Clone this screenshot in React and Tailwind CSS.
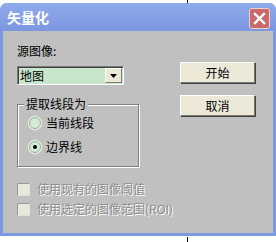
import React from "react";

const font = { fontFamily: '"Noto Sans CJK SC", "Noto Sans", sans-serif' };

const Radio = ({ checked, label }) => (
  <div className="flex items-center h-[16px] gap-[5px]">
    <span className="w-[12px] h-[12px] rounded-full border border-[#9aa89a] bg-[#d4ead4] shadow-[0_0_1px_1px_#f2f8f2] flex items-center justify-center">
      {checked && <span className="w-[4px] h-[4px] rounded-full bg-black" />}
    </span>
    <span className="text-[12px] leading-[16px] text-black">{label}</span>
  </div>
);

const Check = ({ label }) => (
  <div className="flex items-center h-[16px] gap-[7px]">
    <span className="w-[13px] h-[13px] border border-[#9c9c94] border-r-[#e0e0d8] border-b-[#e0e0d8] bg-[#e9e8dc]" />
    <span className="text-[12px] leading-[16px] text-[#8e8e8e] [text-shadow:1px_1px_0_#ffffff]">
      {label}
    </span>
  </div>
);

const Button = ({ children }) => (
  <button className="w-[75px] h-[21px] bg-[#ece9d8] border border-t-white border-l-white border-r-[#7a7a72] border-b-[#7a7a72] shadow-[1px_1px_0_#404040] text-[12px] leading-[16px] text-black flex items-center justify-center">
    {children}
  </button>
);

export default function App() {
  return (
    <div className="relative w-[276px] h-[242px] bg-white overflow-hidden" style={font}>
      <div className="absolute left-[187px] top-0 w-px h-[3px] bg-black" />
      <div className="absolute left-[187px] top-[237px] w-px h-[5px] bg-black" />

      <div className="mt-[3px] h-[233px] rounded-t-[7px] bg-[#7d98e2] flex flex-col px-[3px] pb-[3px]">
        {/* title bar */}
        <div className="h-[28px] flex items-start justify-between -mx-[3px] pl-[7px] pr-[6px] bg-gradient-to-b from-[#8fa9ec] to-[#7c97e0] rounded-t-[7px]">
          <span className="mt-[6px] text-[14px] leading-[16px] font-bold text-white">矢量化</span>
          <span className="mt-[5px] w-[21px] h-[21px] rounded-[3px] border border-[#f0d0d0] bg-[#c96a6a] flex items-center justify-center">
            <svg width="13" height="13" viewBox="0 0 13 13">
              <path d="M2 2 L11 11 M11 2 L2 11" stroke="white" strokeWidth="2.4" strokeLinecap="square" />
            </svg>
          </span>
        </div>

        {/* body */}
        <div className="flex-1 bg-[#c0c0c0] pl-[14px] pt-[12px] flex flex-col">
          <div className="flex items-start">
            <div className="w-[122px] flex flex-col">
              <div className="h-[16px] text-[12px] leading-[16px] text-black">源图像:</div>
              <div className="mt-[7px] w-[107px] h-[19px] border border-t-[#7a7a7a] border-l-[#7a7a7a] border-r-white border-b-white flex items-center bg-[#c8e6cc] shadow-[inset_1px_1px_0_#404040]">
                <span className="flex-1 pl-[2px] text-[12px] leading-[16px] text-black">地图</span>
                <span className="w-[17px] h-[15px] mr-[1px] bg-[#ece9d8] border border-t-white border-l-white border-r-[#7a7a72] border-b-[#7a7a72] flex items-center justify-center">
                  <svg width="7" height="4" viewBox="0 0 7 4">
                    <path d="M0 0 H7 L3.5 4 Z" fill="black" />
                  </svg>
                </span>
              </div>
              <fieldset className="mt-[12px] w-[122px] h-[70px] border border-[#808080] shadow-[inset_1px_1px_0_#ffffff,1px_1px_0_#ffffff]">
                <legend className="ml-[6px] px-[2px] bg-[#c0c0c0] text-[12px] leading-[14px] text-black">提取线段为</legend>
                <div className="mt-[4px] pl-[11px] flex flex-col gap-[8px]">
                  <Radio label="当前线段" />
                  <Radio checked label="边界线" />
                </div>
              </fieldset>
            </div>
            <div className="ml-[41px] mt-[19px] flex flex-col gap-[12px]">
              <Button>开始</Button>
              <Button>取消</Button>
            </div>
          </div>

          <div className="mt-[14px] flex flex-col gap-[4px]">
            <Check label="使用现有的图像阈值" />
            <Check label="使用选定的图像范围(ROI)" />
          </div>
        </div>
      </div>
    </div>
  );
}
